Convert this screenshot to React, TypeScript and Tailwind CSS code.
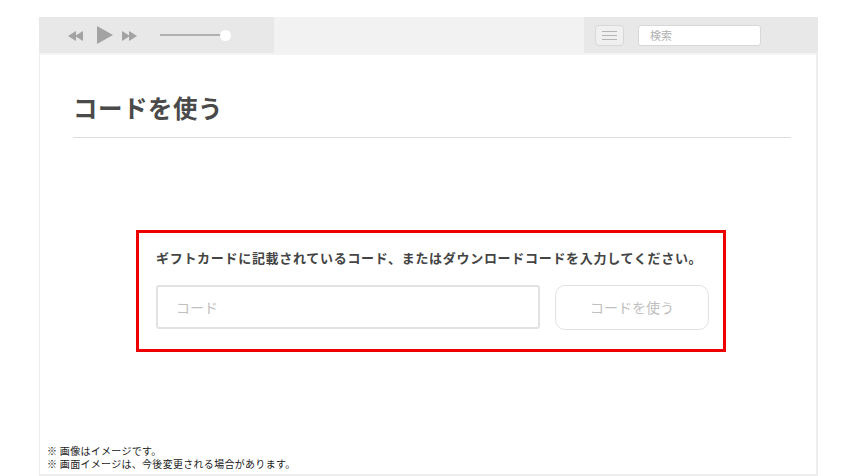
import React from "react";

const font = { fontFamily: '"Noto Sans CJK JP", "Noto Sans", sans-serif' };

export default function App() {
  return (
    <div className="w-[861px] h-[476px] bg-white overflow-hidden" style={font}>
      <div className="pt-[17px] pl-[39px]">
        <div className="w-[779px] h-[459px] flex flex-col">
          {/* toolbar */}
          <div className="h-[36px] flex shrink-0">
            <div className="w-[235px] bg-[#e8e8e8] flex items-center pl-[29px]">
              <svg width="16" height="10" viewBox="0 0 16 10" className="mt-[1px]">
                <polygon points="0,5 8,0 8,10" fill="#a3a3a3" />
                <polygon points="7,5 15,0 15,10" fill="#a3a3a3" />
              </svg>
              <svg width="16" height="18" viewBox="0 0 16 18" className="ml-[13px]">
                <polygon points="0,0 16,9 0,18" fill="#a3a3a3" />
              </svg>
              <svg width="16" height="10" viewBox="0 0 16 10" className="ml-[9px] mt-[1px]">
                <polygon points="0,0 8,5 0,10" fill="#a3a3a3" />
                <polygon points="7,0 15,5 7,10" fill="#a3a3a3" />
              </svg>
              <div className="ml-[22px] flex items-center">
                <div className="w-[62px] h-[2px] bg-[#b0b0b0]" />
                <div className="w-[11px] h-[11px] rounded-full bg-white -ml-[2px]" />
              </div>
            </div>
            <div className="flex-1 bg-[#f2f2f2]" />
            <div className="w-[234px] bg-[#e8e8e8] flex items-center pl-[11px]">
              <div className="w-[29px] h-[21px] rounded-[4px] border border-[#d8d8d8] bg-[#f0f0f0] flex flex-col items-center justify-center gap-[3px]">
                <div className="w-[15px] h-[1px] bg-[#b5b5b5]" />
                <div className="w-[15px] h-[1px] bg-[#b5b5b5]" />
                <div className="w-[15px] h-[1px] bg-[#b5b5b5]" />
              </div>
              <div className="ml-[14px] w-[123px] h-[21px] rounded-[3px] border border-[#d8d8d8] bg-white flex items-center pl-[11px] text-[11px] text-[#b0b0b0]">
                検索
              </div>
            </div>
          </div>
          {/* content */}
          <div className="flex-1 flex flex-col w-[779px] border-l border-r-2 border-[#eeeeee] border-t-2 border-t-[#f4f4f4] border-b-2 border-b-[#eeeeee]">
            <div className="ml-[33px] mr-[25px] mt-[37px] pb-[13px] border-b border-[#dddddd]">
              <h1 className="text-[24.5px] leading-[32px] font-bold text-[#4a4a4a] tracking-[0.5px]">コードを使う</h1>
            </div>
            <div className="mt-[92px] ml-[96px] w-[590px] h-[122px] border-[3px] border-[#ee0000] pl-[17px] pr-[10px] pt-[15px]">
              <p className="text-[13px] leading-[20px] font-bold text-[#444444] tracking-[0.7px] whitespace-nowrap">
                ギフトカードに記載されているコード、またはダウンロードコードを入力してください。
              </p>
              <div className="flex mt-[17px] gap-[15px]">
                <div className="w-[384px] shrink-0 h-[44px] border-2 border-[#e2e2e2] rounded-[3px] flex items-center pl-[18px] text-[14px] text-[#c0c0c0]">
                  コード
                </div>
                <div className="w-[154px] shrink-0 h-[45px] border border-[#e2e2e2] rounded-[10px] flex items-center justify-center text-[14px] text-[#c0c0c0]">
                  コードを使う
                </div>
              </div>
            </div>
            <div className="mt-auto mb-[4px] ml-[7px] text-[10px] tracking-[0.3px] text-[#222222] flex flex-col">
              <span className="leading-[13px]">※ 画像はイメージです。</span>
              <span className="leading-[13px]">※ 画面イメージは、今後変更される場合があります。</span>
            </div>
          </div>
        </div>
      </div>
    </div>
  );
}
